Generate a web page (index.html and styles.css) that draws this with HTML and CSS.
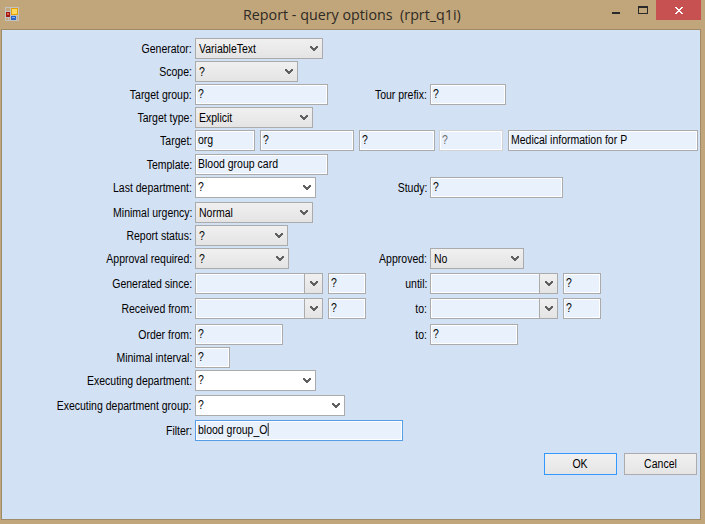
FILE: index.html
```html
<!DOCTYPE html>
<html lang="en">
<head>
<meta charset="utf-8">
<title>Report - query options (rprt_q1i)</title>
<link rel="stylesheet" href="styles.css">
</head>
<body>
<svg width="0" height="0" class="defs"><symbol id="chev" viewBox="0 0 8 6"><path d="M0 0h2v1h1v1h2v-1h1v-1h2v2h-1v1h-1v1h-1v1h-2v-1h-1v-1h-1v-1h-1z" fill="#606060"/></symbol></svg>
<div class="window">
  <header class="titlebar">
    <svg class="app-icon" width="14" height="14" viewBox="0 0 14 14" shape-rendering="crispEdges">
      <path d="M0 0h14v14H0z" fill="#c3c3c3"/>
      <path d="M1 1h4v3H1zM1 11h2v2H1zM4 11h1v2H4zM12 9h1v4h-1z" fill="#c1a57b"/>
      <path d="M1 5h4v5H1z" fill="#a01818"/><path d="M2 6h2v2H2z" fill="#e06040"/>
      <path d="M6 1h7v7H6z" fill="#e0a000"/><path d="M7 2h5v5H7z" fill="#ffd860"/>
      <path d="M6 9h5v4H6z" fill="#2864c8"/><path d="M7 10h3v1H7z" fill="#78b0ff"/>
    </svg>
    <h1 class="title">Report - query options&nbsp; (rprt_q1i)</h1>
    <div class="controls">
      <svg width="66" height="30" viewBox="0 0 66 30" shape-rendering="crispEdges"><path d="M22 12h8v2h-8z" fill="#2a2a2a"/><path d="M48 6h10v8H48zM49 8v5h8V8z" fill="#2a2a2a" fill-rule="evenodd"/></svg>
      <div class="close"><svg width="8" height="7" viewBox="0 0 8 7" shape-rendering="crispEdges"><path d="M0 0h2v1h1v1h2v-1h1v-1h2v1h-1v1h-1v1h-1v1h1v1h1v1h1v1h-2v-1h-1v-1h-2v1h-1v1h-2v-1h1v-1h1v-1h1v-1h-1v-1h-1v-1h-1z" fill="#fff"/></svg></div>
    </div>
  </header>
  <main class="client">
    <div class="row"><label>Generator:</label><div class="select w128"><span class="text">VariableText</span><svg><use href="#chev"/></svg></div></div>
    <div class="row"><label>Scope:</label><div class="select w103"><span class="text">?</span><svg><use href="#chev"/></svg></div></div>
    <div class="row"><label>Target group:</label><div class="field w133"><span class="text">?</span></div><label>Tour prefix:</label><div class="field w76"><span class="text">?</span></div></div>
    <div class="row"><label>Target type:</label><div class="select w118"><span class="text">Explicit</span><svg><use href="#chev"/></svg></div></div>
    <div class="row"><label>Target:</label><div class="group wide"><div class="field w60"><span class="text">org</span></div><div class="field w94"><span class="text">?</span></div><div class="field w76"><span class="text">?</span></div><div class="field w64 disabled"><span class="text">?</span></div><div class="field w190"><span class="text">Medical information for P</span></div></div></div>
    <div class="row gap3"><label>Template:</label><div class="field w133"><span class="text">Blood group card</span></div></div>
    <div class="row"><label>Last department:</label><div class="combo w121"><span class="text">?</span><svg><use href="#chev"/></svg></div><label>Study:</label><div class="field w133"><span class="text">?</span></div></div>
    <div class="row gap4"><label>Minimal urgency:</label><div class="select w118"><span class="text">Normal</span><svg><use href="#chev"/></svg></div></div>
    <div class="row"><label>Report status:</label><div class="select w93"><span class="text">?</span><svg><use href="#chev"/></svg></div></div>
    <div class="row"><label>Approval required:</label><div class="select w94"><span class="text">?</span><svg><use href="#chev"/></svg></div><label>Approved:</label><div class="select w94"><span class="text">No</span><svg><use href="#chev"/></svg></div></div>
    <div class="row gap4"><label>Generated since:</label><div class="group"><div class="field date"><span class="drop"><svg><use href="#chev"/></svg></span></div><div class="field w38"><span class="text">?</span></div></div><label>until:</label><div class="group"><div class="field date"><span class="drop"><svg><use href="#chev"/></svg></span></div><div class="field w38"><span class="text">?</span></div></div></div>
    <div class="row gap4"><label>Received from:</label><div class="group"><div class="field date"><span class="drop"><svg><use href="#chev"/></svg></span></div><div class="field w38"><span class="text">?</span></div></div><label>to:</label><div class="group"><div class="field date"><span class="drop"><svg><use href="#chev"/></svg></span></div><div class="field w38"><span class="text">?</span></div></div></div>
    <div class="row gap5"><label>Order from:</label><div class="field w88"><span class="text">?</span></div><label>to:</label><div class="field w88"><span class="text">?</span></div></div>
    <div class="row"><label>Minimal interval:</label><div class="field w35"><span class="text">?</span></div></div>
    <div class="row"><label>Executing department:</label><div class="combo w121"><span class="text">?</span><svg><use href="#chev"/></svg></div></div>
    <div class="row gap4"><label>Executing department group:</label><div class="combo w150"><span class="text">?</span><svg><use href="#chev"/></svg></div></div>
    <div class="row gap4"><label>Filter:</label><div class="field w208 focused"><span class="text">blood group_O<span class="caret"></span></span></div></div>
    <div class="actions"><div class="button primary"><span class="text">OK</span></div><div class="button"><span class="text">Cancel</span></div></div>
  </main>
</div>
</body>
</html>
```
FILE: styles.css
```css
* { box-sizing: border-box; }
body { margin: 0; background: #c1a57b; color: #000; font: 12.5px/19px "Liberation Sans", sans-serif; }
.defs { display: none; }
.window { width: 705px; height: 524px; padding: 0 4px 4px 1px; display: flex; flex-direction: column; }
.titlebar { height: 29px; display: flex; flex: none; }
.app-icon { margin: 7px 0 0 4px; flex: none; }
.title { margin: 0 0 0 224px; padding-top: 4px; font: 15px/20px "Open Sans", sans-serif; color: #2e2a24; white-space: nowrap; transform: scaleX(.953); transform-origin: left; }
.controls { margin-left: auto; display: flex; height: 29px; flex: none; }
.close { width: 45px; height: 20px; background: #c75050; display: flex; align-items: center; justify-content: center; }
.client { flex: 1; width: 700px; border: 1px solid #a08b69; background: #d3e1f4; padding: 6px 2px 0 0; }
.row { display: grid; grid-template-columns: 190px 174px 55px 1fr; column-gap: 3px; height: 21px; margin-top: 2px; }
.gap3 { margin-top: 3px; }
.gap4 { margin-top: 4px; }
.gap5 { margin-top: 5px; }
.row label { justify-self: end; line-height: 23px; white-space: nowrap; transform: scaleX(.84); transform-origin: right; }
.text { display: inline-block; transform: scaleX(.84); transform-origin: left; }
.group { display: flex; gap: 5px; }
.wide { grid-column: 2 / 5; }
.wide .disabled { margin-left: -1px; }
.field, .select, .combo { height: 21px; border: 1px solid #ababab; white-space: nowrap; }
.field { background: #e9f1fc; box-shadow: inset 0 0 0 1px #fff; padding-left: 2px; line-height: 18px; flex: none; }
.select, .combo { display: flex; align-items: flex-start; padding: 0 4px 0 3px; justify-content: space-between; }
.select { background: linear-gradient(#f0f0f0, #e4e4e4); line-height: 21px; }
.combo { background: #fff; line-height: 18px; padding-left: 2px; }
.select svg, .combo svg, .drop svg { width: 8px; height: 6px; flex: none; shape-rendering: crispEdges; }
.select svg, .combo svg { margin-top: 7px; }
.date { width: 128px; display: flex; justify-content: flex-end; }
.drop { width: 18px; border-left: 1px solid #ababab; background: linear-gradient(#f0f0f0, #e4e4e4); display: flex; align-items: center; justify-content: center; }
.disabled { border-color: #d3d3d3; color: #6d6d6d; }
.focused { border-color: #569de5; }
.caret { display: inline-block; width: 1.2px; height: 13px; vertical-align: -2px; background: #000; }
.actions { display: flex; justify-content: flex-end; gap: 7px; margin-top: 12px; padding-right: 1px; }
.button { width: 73px; height: 22px; border: 1px solid #acacac; background: linear-gradient(#f0f0f0, #e5e5e5); text-align: center; line-height: 20px; }
.button .text { transform-origin: center; }
.primary { border-color: #3399ff; }
.w35 { width: 35px; } .w38 { width: 38px; } .w60 { width: 60px; } .w64 { width: 64px; }
.w76 { width: 76px; } .w88 { width: 88px; } .w93 { width: 93px; } .w94 { width: 94px; }
.w103 { width: 103px; } .w118 { width: 118px; } .w121 { width: 121px; } .w128 { width: 128px; }
.w133 { width: 133px; } .w150 { width: 150px; } .w190 { width: 190px; } .w208 { width: 208px; }
```
